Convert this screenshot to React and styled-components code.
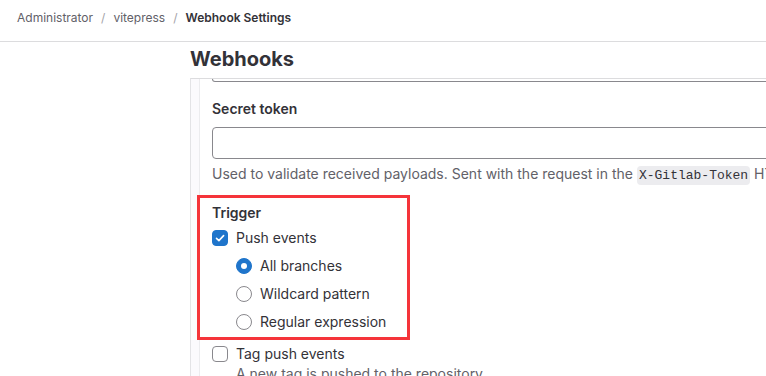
import React from "react";
import styled, { createGlobalStyle } from "styled-components";

const GlobalStyle = createGlobalStyle`
  html, body {
    margin: 0;
    padding: 0;
    background: #ffffff;
    overflow: hidden;
  }
  body {
    font-family: Inter, "Noto Sans", "Liberation Sans", sans-serif;
    color: #333238;
    font-size: 14px;
    line-height: 20px;
  }
`;

const Breadcrumbs = styled.nav`
  box-sizing: border-box;
  height: 42px;
  padding: 10px 17px 0;
  border-bottom: 1px solid #dcdcde;
  display: flex;
  align-items: flex-start;
  font-size: 12px;
  line-height: 16px;
  white-space: nowrap;
`;

const Crumb = styled.span`
  color: ${(p) => (p.$current ? "#333238" : "#626168")};
  font-weight: ${(p) => (p.$current ? 600 : 400)};
`;

const Sep = styled.span`
  color: #a4a3a8;
  margin: 0 8px;
`;

const Main = styled.main`
  padding: 5px 0 0 190px;
`;

const Title = styled.h1`
  margin: 0 0 7px;
  font-size: 20px;
  line-height: 24px;
  font-weight: 700;
  color: #333238;
`;

const Panel = styled.section`
  display: flex;
  border-top: 1px solid #dcdcde;
  border-left: 1px solid #e3e3e6;
  min-height: 400px;
`;

const Stripe = styled.div`
  width: 8px;
  flex: none;
  background: #fbfafd;
  border-right: 1px solid #ececef;
`;

const Content = styled.div`
  flex: 1;
  min-width: 0;
  padding-left: 12px;
`;

const InputTail = styled.div`
  box-sizing: border-box;
  width: 700px;
  height: 3px;
  border: 1px solid #89888d;
  border-top: none;
  border-radius: 0 0 4px 4px;
`;

const Label = styled.div`
  font-weight: 600;
  margin-top: ${(p) => p.$top || 0}px;
  margin-bottom: ${(p) => p.$bottom || 0}px;
`;

const TextInput = styled.div`
  box-sizing: border-box;
  width: 700px;
  height: 32px;
  border: 1px solid #89888d;
  border-radius: 4px;
  background: #fff;
`;

const Help = styled.div`
  color: #626168;
  white-space: nowrap;
  margin-top: ${(p) => p.$top || 0}px;
  padding-left: ${(p) => p.$indent || 0}px;
`;

const Code = styled.code`
  font-family: "Liberation Mono", "DejaVu Sans Mono", monospace;
  font-size: 13px;
  color: #333238;
  background: #ececef;
  border-radius: 4px;
  padding: 2px 2px;
`;

const Trigger = styled.div`
  position: relative;
  margin-top: 17px;
`;

const Highlight = styled.div`
  position: absolute;
  top: -8px;
  left: -15px;
  width: 213px;
  height: 145px;
  box-sizing: border-box;
  border: 3px solid #f5343a;
  pointer-events: none;
`;

const Row = styled.div`
  display: flex;
  align-items: center;
  gap: 8px;
  height: 20px;
  margin-top: ${(p) => p.$top || 0}px;
  white-space: nowrap;
`;

const RadioGroup = styled.div`
  display: flex;
  flex-direction: column;
  gap: 8px;
  padding-left: 24px;
  margin-top: 8px;
`;

const Box = styled.span`
  box-sizing: border-box;
  width: 16px;
  height: 16px;
  flex: none;
  border-radius: 4px;
  border: 1px solid ${(p) => (p.$checked ? "#1f75cb" : "#89888d")};
  background: ${(p) => (p.$checked ? "#1f75cb" : "#fff")};
  display: flex;
  align-items: center;
  justify-content: center;
`;

const Radio = styled.span`
  box-sizing: border-box;
  width: 16px;
  height: 16px;
  flex: none;
  border-radius: 50%;
  border: 1px solid ${(p) => (p.$checked ? "#1f75cb" : "#89888d")};
  background: ${(p) => (p.$checked ? "#1f75cb" : "#fff")};
  display: flex;
  align-items: center;
  justify-content: center;
  &::after {
    content: "";
    display: ${(p) => (p.$checked ? "block" : "none")};
    width: 6px;
    height: 6px;
    border-radius: 50%;
    background: #fff;
  }
`;

const Check = () => (
  <svg width="12" height="12" viewBox="0 0 12 12" fill="none">
    <path d="M2.5 6.3 L4.9 8.6 L9.6 3.6" stroke="#fff" strokeWidth="1.6" strokeLinecap="round" strokeLinejoin="round" />
  </svg>
);

const Checkbox = ({ checked, children, top }) => (
  <Row $top={top}>
    <Box $checked={checked}>{checked && <Check />}</Box>
    <span>{children}</span>
  </Row>
);

const RadioOption = ({ checked, children }) => (
  <Row>
    <Radio $checked={checked} />
    <span>{children}</span>
  </Row>
);

export default function App() {
  return (
    <>
      <GlobalStyle />
      <Breadcrumbs>
        <Crumb>Administrator</Crumb>
        <Sep>/</Sep>
        <Crumb>vitepress</Crumb>
        <Sep>/</Sep>
        <Crumb $current>Webhook Settings</Crumb>
      </Breadcrumbs>
      <Main>
        <Title>Webhooks</Title>
        <Panel>
          <Stripe />
          <Content>
            <InputTail />
            <Label $top={17} $bottom={8}>Secret token</Label>
            <TextInput />
            <Help $top={5}>
              Used to validate received payloads. Sent with the request in the <Code>X-Gitlab-Token</Code> HTTP header.
            </Help>
            <Trigger>
              <Label $bottom={5}>Trigger</Label>
              <Checkbox checked>Push events</Checkbox>
              <RadioGroup>
                <RadioOption checked>All branches</RadioOption>
                <RadioOption>Wildcard pattern</RadioOption>
                <RadioOption>Regular expression</RadioOption>
              </RadioGroup>
              <Highlight />
            </Trigger>
            <Checkbox top={12}>Tag push events</Checkbox>
            <Help $indent={24}>A new tag is pushed to the repository.</Help>
          </Content>
        </Panel>
      </Main>
    </>
  );
}
